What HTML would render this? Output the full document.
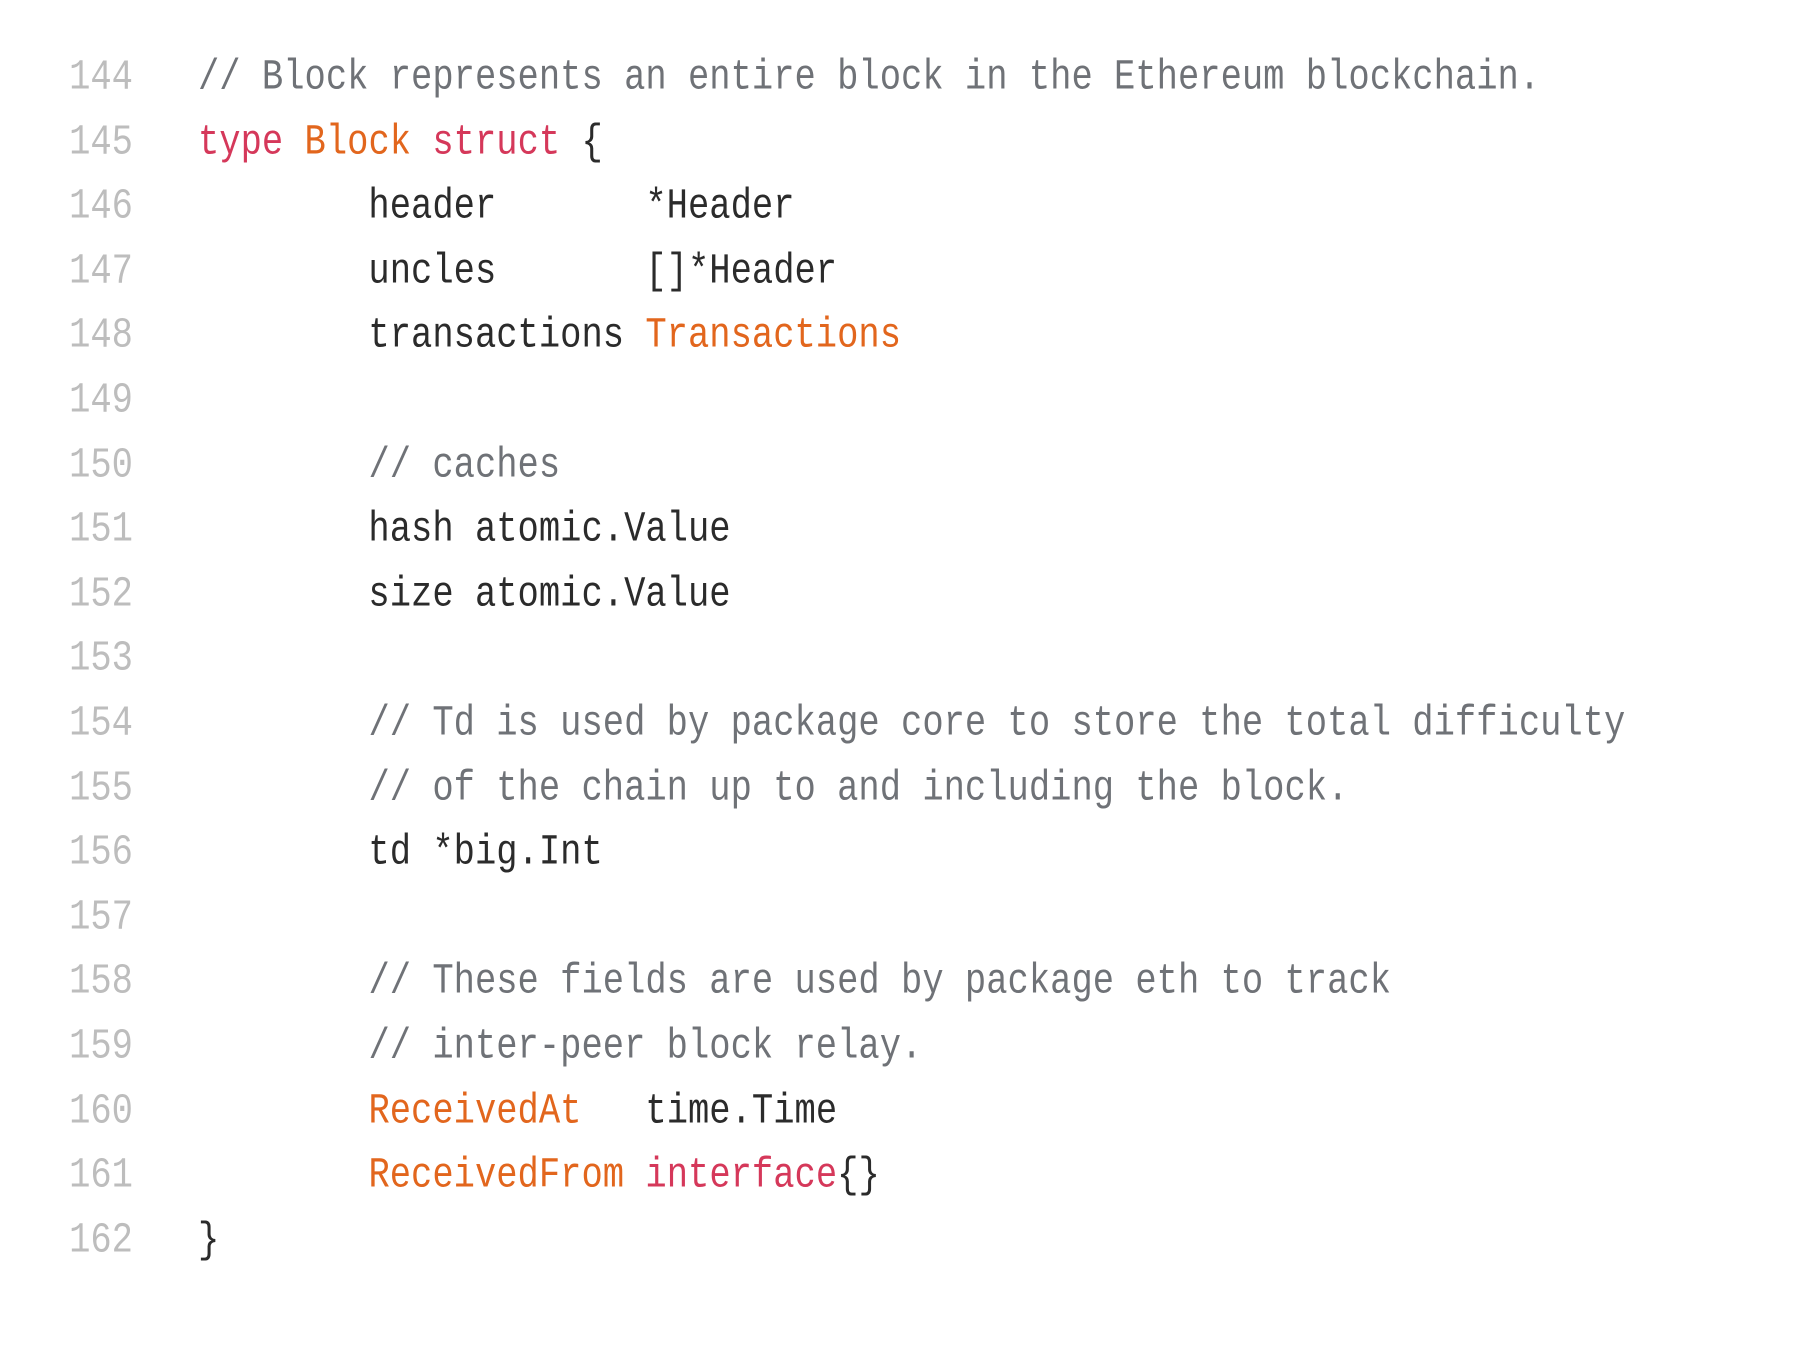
<!DOCTYPE html>
<html><head><meta charset="utf-8"><style>
html,body{margin:0;padding:0;background:#fff;width:1801px;height:1346px;overflow:hidden}
.wrap{position:absolute;left:0;top:46px;font-family:"Liberation Mono",monospace;font-size:35.5px;line-height:64.6px;color:#2b2b2b}
.ln{position:absolute;left:0;width:133px;text-align:right;color:#bdbdbd;white-space:pre;transform:scaleY(1.2)}
.code{position:absolute;left:198px;white-space:pre;transform:scaleY(1.2);transform-origin:50% 50%}
.row{position:relative;height:64.6px}
.c{color:#6f7277}.k{color:#d5385a}.o{color:#e2661d}
</style></head><body><div class="wrap"><div class="row"><span class="ln">144</span><span class="code"><span class="c">// Block represents an entire block in the Ethereum blockchain.</span></span></div><div class="row"><span class="ln">145</span><span class="code"><span class="k">type</span> <span class="o">Block</span> <span class="k">struct</span> {</span></div><div class="row"><span class="ln">146</span><span class="code">        header       *Header</span></div><div class="row"><span class="ln">147</span><span class="code">        uncles       []*Header</span></div><div class="row"><span class="ln">148</span><span class="code">        transactions <span class="o">Transactions</span></span></div><div class="row"><span class="ln">149</span></div><div class="row"><span class="ln">150</span><span class="code">        <span class="c">// caches</span></span></div><div class="row"><span class="ln">151</span><span class="code">        hash atomic.Value</span></div><div class="row"><span class="ln">152</span><span class="code">        size atomic.Value</span></div><div class="row"><span class="ln">153</span></div><div class="row"><span class="ln">154</span><span class="code">        <span class="c">// Td is used by package core to store the total difficulty</span></span></div><div class="row"><span class="ln">155</span><span class="code">        <span class="c">// of the chain up to and including the block.</span></span></div><div class="row"><span class="ln">156</span><span class="code">        td *big.Int</span></div><div class="row"><span class="ln">157</span></div><div class="row"><span class="ln">158</span><span class="code">        <span class="c">// These fields are used by package eth to track</span></span></div><div class="row"><span class="ln">159</span><span class="code">        <span class="c">// inter-peer block relay.</span></span></div><div class="row"><span class="ln">160</span><span class="code">        <span class="o">ReceivedAt</span>   time.Time</span></div><div class="row"><span class="ln">161</span><span class="code">        <span class="o">ReceivedFrom</span> <span class="k">interface</span>{}</span></div><div class="row"><span class="ln">162</span><span class="code">}</span></div></div></body></html>
